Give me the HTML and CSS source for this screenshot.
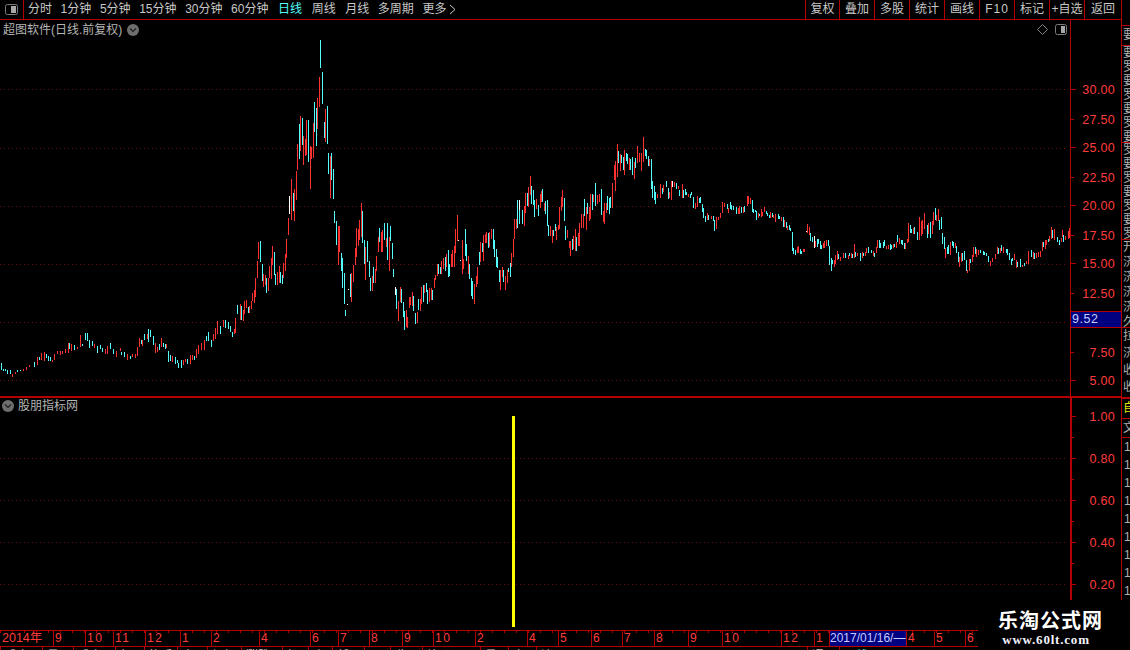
FILE: index.html
```html
<!DOCTYPE html>
<html lang="zh-CN">
<head>
<meta charset="utf-8">
<title>超图软件</title>
<link rel="stylesheet" href="styles.css">
</head>
<body>
<div class="app">
  <div class="left">
    <header class="toolbar">
      <div class="toggle-box">
        <svg class="toggle-icon" width="13" height="11" viewBox="0 0 13 11"><rect x="0.5" y="0.5" width="12" height="10" rx="2" fill="none" stroke="#7c7c7c"/><rect x="6" y="2" width="5" height="7" fill="#a8a8a8"/></svg>
      </div>
      <nav class="periods">
        <span>分时</span><span>1分钟</span><span>5分钟</span><span>15分钟</span><span>30分钟</span><span>60分钟</span><span class="active">日线</span><span class="wide">周线</span><span>月线</span><span>多周期</span><span>更多</span>
        <svg class="more-arrow" width="7" height="11" viewBox="0 0 7 11"><path d="M1 1l5 4.5L1 10" fill="none" stroke="#c8c8c8"/></svg>
      </nav>
      <div class="actions">
        <span class="first">复权</span><span>叠加</span><span>多股</span><span>统计</span><span>画线</span><span class="latin">F10</span><span>标记</span><span>+自选</span><span class="last">返回</span>
      </div>
    </header>

    <section class="pane pane-main">
      <svg class="chart" width="1121" height="376" viewBox="0 20 1121 376">
        <g class="grid">
          <path d="M0 89.5H1068M0 148.5H1068M0 206.5H1068M0 264.5H1068M0 322.5H1068M0 380.5H1068"/>
        </g>
        <path class="axis-line" d="M1070.5 20V396"/>
        <path class="axis-line" d="M1071 89.5h5M1071 119.5h3M1071 147.5h5M1071 177.5h3M1071 205.5h5M1071 235.5h3M1071 263.5h5M1071 293.5h3M1071 352.5h3M1071 380.5h5"/>
        <path id="bars-red" class="bars bars-red"/>
        <path id="bars-cyan" class="bars bars-cyan"/>
        <path id="bars-white" class="bars bars-white"/>
        <text class="tick" x="1115" y="94">30.00</text>
        <text class="tick" x="1115" y="124">27.50</text>
        <text class="tick" x="1115" y="152">25.00</text>
        <text class="tick" x="1115" y="182">22.50</text>
        <text class="tick" x="1115" y="210">20.00</text>
        <text class="tick" x="1115" y="240">17.50</text>
        <text class="tick" x="1115" y="268">15.00</text>
        <text class="tick" x="1115" y="298">12.50</text>
        <text class="tick" x="1115" y="357">7.50</text>
        <text class="tick" x="1115" y="385">5.00</text>
      </svg>
      <div class="pane-title pane-title-main">
        <span>超图软件(日线.前复权)</span>
        <svg class="chevron" width="12" height="12" viewBox="0 0 12 12"><circle cx="6" cy="6" r="6" fill="#6e6e6e"/><path d="M3 4.5l3 3 3-3" fill="none" stroke="#1e1e1e" stroke-width="1.2"/></svg>
      </div>
      <div class="pane-tools">
        <svg width="11" height="11" viewBox="0 0 11 11"><path d="M5.5 .5l5 5-5 5-5-5z" fill="none" stroke="#808080"/></svg>
        <svg width="12" height="11" viewBox="0 0 12 11"><rect x="0.5" y="0.5" width="11" height="10" rx="2" fill="none" stroke="#7c7c7c"/><rect x="6" y="2" width="4" height="7" fill="#a8a8a8"/></svg>
      </div>
      <div class="last-price">9.52</div>
    </section>

    <section class="pane pane-sub">
      <svg class="chart" width="1121" height="232" viewBox="0 398 1121 232">
        <g class="grid">
          <path d="M0 458.5H1068M0 500.5H1068M0 542.5H1068M0 584.5H1068"/>
        </g>
        <path class="axis-line axis-thick" d="M1071 398V600"/>
        <path class="axis-line" d="M1071 416.5h5M1071 437.5h3M1071 458.5h5M1071 479.5h3M1071 500.5h5M1071 521.5h3M1071 542.5h5M1071 563.5h3M1071 584.5h5"/>
        <rect class="signal" x="512" y="416" width="3" height="211"/>
        <text class="tick" x="1115" y="421">1.00</text>
        <text class="tick" x="1115" y="463">0.80</text>
        <text class="tick" x="1115" y="505">0.60</text>
        <text class="tick" x="1115" y="547">0.40</text>
        <text class="tick" x="1115" y="589">0.20</text>
      </svg>
      <div class="pane-title pane-title-sub">
        <svg class="chevron" width="12" height="12" viewBox="0 0 12 12"><circle cx="6" cy="6" r="6" fill="#6e6e6e"/><path d="M3 4.5l3 3 3-3" fill="none" stroke="#1e1e1e" stroke-width="1.2"/></svg>
        <span>股朋指标网</span>
      </div>
    </section>

    <div class="time-axis">
      <span style="width:53px">2014年</span><span style="width:32px">9</span><span style="width:28px">10</span><span style="width:32px">11</span><span style="width:35px">12</span><span style="width:31px">1</span><span style="width:48px">2</span><span style="width:51px">4</span><span style="width:28px">6</span><span style="width:31px">7</span><span style="width:33px">8</span><span style="width:31px">9</span><span style="width:42px">10</span><span style="width:52px">2</span><span style="width:31px">4</span><span style="width:33px">5</span><span style="width:31px">6</span><span style="width:32px">7</span><span style="width:34px">8</span><span style="width:34px">9</span><span style="width:59px">10</span><span style="width:33px">12</span><span style="width:15px">1</span><span class="cursor-date" style="width:77px">2017/01/16/—</span><span style="width:28px">4</span><span style="width:31px">5</span><span style="width:13px">6</span>
    </div>
    <div class="status-strip">
      <span style="width:42px">成交</span><span style="width:31px">量</span><span style="width:42px">成交</span><span style="width:29px">额</span><span style="width:33px">换手</span><span style="width:30px">率</span><span style="width:34px">振幅</span><span style="width:41px">涨跌</span><span style="width:26px">幅</span><span style="width:24px">高</span><span style="width:32px">低</span><span style="width:26px">开</span><span style="width:32px">收</span><span style="width:58px">均价</span><span style="width:28px">量比</span><span style="width:28px">市</span><span style="width:271px">流</span><span style="width:32px">通</span><span class="status-active" style="width:32px">日线</span>
    </div>
  </div>

  <aside class="side">
    <div class="side-blank"></div>
    <div class="side-group side-g1">要</div>
    <div class="side-group side-g2">要<br>罗<br>要<br>罗<br>要<br>罗<br>要</div>
    <div class="side-group side-g3">罗<br>要<br>罗<br>要<br>罗<br>要<br>罗</div>
    <div class="side-group side-g4">开<br>济<br>济<br>济<br>济<br>久</div>
    <div class="side-group side-g5">拉<br>济<br>收<br>收</div>
    <div class="side-group side-g6">自</div>
    <div class="side-group side-g7">文</div>
    <div class="side-group side-g8">1<br>1<br>1<br>1<br>1<br>1<br>1<br>1<br>1</div>
  </aside>

  <div class="watermark">
    <div class="wm-name">乐淘公式网</div>
    <div class="wm-url">www.60lt.com</div>
  </div>
</div>
<script src="chart.js"></script>
</body>
</html>
```

FILE: styles.css
```css
* { box-sizing: border-box; }

html, body {
  margin: 0;
  width: 1130px;
  height: 650px;
  overflow: hidden;
  background: #000;
}

.app {
  position: relative;
  display: flex;
  width: 1130px;
  height: 650px;
  font: 12px "Liberation Sans", "Noto Sans CJK SC", sans-serif;
  color: #c8c8c8;
}

.left {
  display: flex;
  flex-direction: column;
  width: 1122px;
  height: 650px;
  border-right: 1px solid #b40000;
}

/* toolbar */
.toolbar {
  display: flex;
  align-items: stretch;
  flex: 0 0 20px;
  border-bottom: 1px solid #b40000;
  line-height: 19px;
}

.toggle-box {
  display: flex;
  align-items: center;
  justify-content: center;
  width: 24px;
  border-right: 1px solid #b40000;
}

.periods {
  display: flex;
  align-items: center;
  gap: 8.6px;
  margin-left: 4px;
}

.periods .active {
  margin: 0 1px;
  color: #54fcfc;
}

.periods .wide { margin-right: 1px; }
.more-arrow { margin-left: -6px; }

.actions {
  display: flex;
  margin-left: auto;
}

.actions span {
  width: 35px;
  border-left: 1px solid #b40000;
  text-align: center;
}

.actions .first { width: 34px; }
.actions .last { width: 37px; }
.actions .latin { letter-spacing: 1px; }

/* panes */
.pane { position: relative; }
.pane-main { flex: 0 0 376px; }
.pane-sub {
  flex: 0 0 234px;
  border-top: 2px solid #b40000;
}

.chart { display: block; }

.grid path {
  fill: none;
  stroke: #681010;
  stroke-width: 1;
  stroke-dasharray: 1 3;
  shape-rendering: crispEdges;
}

.axis-line {
  fill: none;
  stroke: #b40000;
  stroke-width: 1;
  shape-rendering: crispEdges;
}

.axis-thick { stroke-width: 2; }

.bars {
  fill: none;
  stroke-width: 1;
  shape-rendering: crispEdges;
}

.bars-red { stroke: #ff3232; }
.bars-cyan { stroke: #54fcfc; }
.bars-white { stroke: #fff; }

.signal { fill: #ffff00; }

.tick {
  fill: #ff3c3c;
  font: 12.5px "Liberation Sans", sans-serif;
  text-anchor: end;
  letter-spacing: .3px;
}

.pane-title {
  position: absolute;
  display: flex;
  align-items: center;
  gap: 5px;
  line-height: 16px;
  color: #b4b4b4;
}

.pane-title-main { left: 3px; top: 2px; }
.pane-title-sub { left: 2px; top: 0; gap: 4px; }

.pane-tools {
  position: absolute;
  top: 4px;
  left: 1037px;
  display: flex;
  gap: 7px;
  line-height: 0;
}

.last-price {
  position: absolute;
  left: 1071px;
  top: 291px;
  width: 50px;
  height: 17px;
  padding-left: 1px;
  background: #000080;
  border-top: 1px solid #b40000;
  border-bottom: 1px solid #b40000;
  color: #c4ccff;
  font-size: 12.5px;
  letter-spacing: .5px;
  line-height: 15px;
}

/* time axis */
.time-axis {
  display: flex;
  flex: 0 0 17px;
  width: 979px;
  border-top: 1px solid #b40000;
  border-bottom: 1px solid #b40000;
  border-right: 1px solid #b40000;
  background: repeating-linear-gradient(to right, #b40000 0 1px, transparent 1px 12px) 0 0 / 100% 2px no-repeat;
  color: #ff3c3c;
  line-height: 15px;
}

.time-axis span {
  flex: none;
  padding-left: 1px;
  border-left: 1px solid #b40000;
  letter-spacing: 1.5px;
  white-space: nowrap;
  overflow: hidden;
}

.time-axis span:first-child {
  padding-left: 2px;
  border-left: 0;
  letter-spacing: 0;
  font-size: 12.5px;
}

.time-axis .cursor-date {
  padding-left: 0;
  background: #000080;
  color: #c4ccff;
  letter-spacing: 0;
}

.status-strip {
  display: flex;
  flex: 0 0 3px;
  overflow: hidden;
  line-height: 19px;
  color: #c8c8c8;
}

.status-strip span {
  flex: none;
  height: 3px;
  padding-left: 4px;
  border-left: 1px solid #b40000;
  overflow: hidden;
}

.status-strip .status-active { color: #54fcfc; }

/* clipped right-hand list */
.side {
  display: flex;
  flex-direction: column;
  width: 8px;
  height: 650px;
  overflow: hidden;
  color: #b0b0b0;
  font-size: 12px;
}

.side-blank { flex: 0 0 25px; }

.side-group {
  padding-left: 1px;
  overflow: hidden;
  border-top: 1px solid #b40000;
  white-space: nowrap;
}

.side-g1 { flex: 0 0 20px; line-height: 19px; }
.side-g2 { flex: 0 0 97px; line-height: 14px; }
.side-g3 { flex: 0 0 97px; line-height: 14px; }
.side-g4 { flex: 0 0 88px; line-height: 15px; }
.side-g5 { flex: 0 0 70px; line-height: 17px; }
.side-g6 { flex: 0 0 21px; line-height: 19px; color: #e6e600; border-top-width: 2px; }
.side-g7 { flex: 0 0 19px; line-height: 18px; }
.side-g8 { flex: 0 0 163px; line-height: 18px; padding-left: 2px; }

/* watermark */
.watermark {
  position: absolute;
  left: 978px;
  top: 600px;
  width: 152px;
  height: 50px;
  padding-top: 8px;
  background: #000;
  color: #fff;
  text-align: center;
}

.wm-name {
  margin-left: 20px;
  width: 104px;
  font: 700 20px/24px "Noto Sans CJK SC", sans-serif;
  letter-spacing: 1px;
  white-space: nowrap;
}

.wm-url {
  margin-left: 23px;
  width: 90px;
  font: 700 13px/15px "Liberation Serif", serif;
  letter-spacing: .8px;
  white-space: nowrap;
  color: #f4f4ff;
}
```

FILE: chart.js
```js
// Candle wicks read off the chart: colour, x, top, bottom in zoom units per stretch.
var stretches = [
  [0, 320, "c4,129,150 c10,147,153 c16,147,153 c22,150,162 c31,150,162 r37,162,171 r46,156,162 c52,150,156 c61,150,153 r70,147,153 r79,141,150 r88,135,141 c103,126,141 r112,111,135 c118,111,120 r124,99,120 r133,96,123 c139,102,114 c145,108,123 c151,111,123 r157,120,126 r163,102,120 r172,93,102 r181,93,105 r187,93,102 r196,87,99 r205,69,99 c208,69,87 r214,72,93 c223,75,90 r232,81,87 r241,45,81 c247,72,78 c256,39,60 c262,39,63 c268,60,84 c277,63,78 r283,72,84 c292,78,99 c301,75,87 c307,84,96 r316,87,102 r322,78,102 c331,69,87 c340,87,102 r349,93,111 r361,84,93 c364,96,105 c373,96,111 r382,102,120 c391,108,117 r397,102,111 r406,102,114 r412,81,108 r418,54,81 c424,60,72 r427,60,78 c433,42,60 r442,42,57 c445,27,66 c451,30,51 c460,48,75 r466,69,99 r472,81,96 c478,72,90 r484,54,81 c490,69,81 c496,72,87 r499,72,84 c505,93,126 c511,105,123 r517,108,126 c526,111,132 c532,120,129 c535,129,144 c544,120,144 r550,120,135 r556,117,126 c562,117,132 r571,105,132 r577,105,120 c583,108,120 r589,87,114 r595,75,102 r604,69,90 r613,60,90 c619,48,63 c625,36,63 c634,60,81 r640,42,63 r646,24,57 r652,3,42 c661,18,42 r670,0,21 c676,0,24 c685,6,27 c691,18,36 c697,36,51 r703,27,42 r706,0,30"],
  [160, 180, "r226,414,459 c232,375,402 r241,372,420 c244,378,420 r250,390,423 r253,363,402 r259,360,384 c265,381,399 r268,378,399"],
  [250, 30, "r4,812,836 r8,790,812 r13,780,820 r16,745,800 r22,693,745 r26,636,686 c31,633,697 c37,702,752 r40,732,772 r46,735,765 c49,744,788 r55,745,782 r58,708,745 r64,685,748 r67,648,706 c73,666,735 c76,732,764 r82,725,764 r88,708,758 c91,726,758 c97,735,762 r100,700,745 r106,672,722 r109,627,685 r115,564,614 w118,498,552 r124,447,570 c130,490,542 r133,477,572 r139,423,510 r142,342,420 c148,282,387 r151,258,362 c157,264,345 r160,318,404 r166,326,378 r169,270,375 c175,270,396 r181,348,476 r184,350,388 r190,280,384 c193,216,305 c199,235,347 r202,205,296 r208,140,232 c211,30,113 c217,126,221 c223,276,324 r226,237,335 c232,228,342 c235,369,431 r241,378,503 c244,369,449 c250,417,506 c253,543,578 c259,573,644 r265,588,705 r268,588,666 c274,669,722 c277,684,774 c283,729,822 w295,776,779 w292,822,825 c286,840,857 c301,732,800 r304,729,815 r310,705,755 r316,654,705 r319,594,680 r325,597,647 r328,570,630 r334,519,620 c337,543,640 c343,630,702 r346,651,750 c352,633,696 c358,693,741 c361,744,782 r367,738,782 c370,711,759 r376,717,759 r379,678,723 r385,621,666 c388,594,636 r394,606,666 r397,600,666 c403,579,630 r409,624,651 c412,579,690 r418,621,723 c421,588,633 c427,639,687 c430,717,741 w436,771,795 c439,777,837 r445,813,873"],
  [390, 130, "r25,513,573 r31,471,517 c34,477,519 c40,516,561 c43,543,600 r49,540,591 r52,561,594 r58,501,534 r61,501,525 r67,486,528 c70,498,543 c76,549,582 r82,546,579 c85,507,540 r91,507,543 r94,471,522 c100,465,516 r103,465,489 c109,459,486 c112,480,522 r118,474,516 r124,474,510 c127,480,510 r133,444,474 r136,435,450 r142,402,438 c145,402,432 c151,411,432 r154,393,432 r160,384,417 c166,381,423 r169,372,411 c175,360,441 c178,402,438 r184,372,411 r187,360,411 r193,348,411 r196,297,369 r202,255,333 w205,330,333 w211,390,393 r217,330,432 r220,387,417 c226,297,378 c229,342,393 r235,378,432 c238,402,447 c244,444,498 c247,453,507 r253,462,522 r259,438,471 r262,411,462 c268,366,405 r271,336,396 c277,339,366 r280,315,393 r286,312,339 r289,306,339 c295,309,354 r298,306,351 r304,297,327 c310,297,357 c313,330,381 c319,357,411 c322,381,414 c328,420,456 r331,420,480 r337,411,441 c340,420,456 r346,438,480 r352,420,459 c355,414,426 c361,399,441 r364,369,411 r370,327,381 r373,267,327 r379,267,297 c382,210,294 w388,210,240 c388,240,282 c397,240,282 r403,228,288 r406,189,249 c412,189,228 r415,171,231 r421,138,195 c424,168,222 c430,180,225 c433,210,261 r439,207,238 c445,225,258 r451,192,234 r454,183,216 c457,177,216 r463,219,243 c466,213,252 c472,210,288 c475,285,318 r481,288,318 r487,300,339 c490,300,318 c496,282,303 r499,291,330 r505,285,300 r508,231,297 r514,201,243 r517,180,231 c523,204,273 c526,288,330 r532,300,324 r538,333,354 r541,333,378 c547,327,360 r550,318,357 r556,297,363 c559,321,363 r565,309,348 r568,279,348 r574,252,294 r580,252,294 c583,207,258 r589,231,300 c592,219,252 r598,231,273 r601,192,267 c607,192,240 r610,195,216 c616,159,228 r622,195,222 r628,192,216 c634,177,255 r640,243,276 r643,219,282 r649,219,249 c652,198,240 c658,204,252 c661,201,234 r667,159,234 r673,105,150 r676,93,183 r682,42,141 c685,63,99 r691,72,123 c694,75,99 c700,81,120 r703,60,135 c709,69,93 c712,72,102 r718,84,120 c721,87,120 c727,81,135 r733,96,147 c736,84,114 r742,48,99 r748,69,96 r754,69,123 r760,21,96 c766,57,78 c769,60,87 c775,78,108 r778,87,108 c784,87,177 c787,153,204 c793,168,210 c796,186,222 r802,192,204 r811,162,204 c817,174,192 r820,165,186 c829,153,171 c835,174,207 r838,186,204 r844,153,210 w847,153,171 r853,156,171 c859,159,177 r865,168,177 c868,180,198 r877,162,204 c880,180,204 c886,177,195 c889,186,195 r895,192,201 c901,192,204 c904,186,195 c910,201,234 r916,219,237 r922,198,231 c928,204,219 c931,201,219 c937,222,246 c940,234,264 c946,258,276 r952,249,270 c955,255,270 r964,258,267 c970,258,273 c973,270,303 r979,261,297 r985,261,270 r991,249,264 r997,216,249 r1003,219,231 c1012,222,237 r1015,234,249"],
  [730, 170, "c1,96,117 c4,105,120 c10,108,120 c19,111,132 r25,114,132 r28,108,132 c34,111,129 r40,111,129 c43,108,126 r52,78,108 r55,78,102 r61,84,102 c67,90,126 c70,117,129 c76,120,126 c79,123,150 r85,129,144 c88,132,138 r94,117,141 r97,126,138 r103,111,126 c109,123,132 c112,129,138 c118,135,144 r121,126,144 c127,129,141 r130,135,144 r136,132,156 c145,132,147 c148,138,147 r154,141,153 c160,141,171 r163,150,171 c169,156,174 r172,168,180 c178,165,180 c181,174,183 c187,186,243 c190,234,252 c196,240,255 r202,231,249 r205,228,249 c211,237,252 c214,243,252 r220,237,246 r223,237,246 w229,183,186 r232,162,189 r238,171,195 c241,189,213 c247,201,216 w253,198,234 r256,213,231 c262,207,231 c265,207,222 c271,213,237 c274,225,237 r280,219,234 r283,213,234 r289,210,228 c295,210,228 c298,228,285 c304,264,303 c307,270,282 r313,270,291 r316,255,282 r322,243,270 c325,252,267 r331,261,273 r340,249,264 c346,249,264 r355,255,267 c358,249,258 r364,249,264 c367,252,264 r373,222,264 c376,246,261 r382,249,258 c391,249,273 r397,246,264 c400,249,258 r406,246,258 r409,234,249 c415,231,249 c424,240,249 r430,243,258 c433,249,261 r439,231,249 r442,210,234 c448,210,234 c451,219,234 c460,216,234 c463,210,228 r469,228,237 r475,225,237 c481,222,240 c484,225,237 r490,222,234 c493,222,231 r499,216,234 c502,195,216 r508,204,222 c514,210,222 c517,210,225 c523,219,237 r526,219,237 r532,207,219 r535,159,216 c541,165,189 c544,177,189 r550,174,192 c553,171,192 c562,186,210 r568,141,210 r574,153,198 r577,150,192 r583,129,177 c592,165,204 r595,159,192 c601,156,204 r607,153,192 r610,126,165 c616,114,150 r619,135,153 r625,117,153 c628,150,180 c634,141,177 c637,189,222 c643,201,237 r646,234,264 c652,231,252 c655,225,252 r661,216,255 c667,213,228 c670,216,234 r676,219,234 c679,228,249 c685,246,276 r688,261,291 r694,249,276 c697,249,273 c703,243,270 c709,270,303 r712,300,309 r718,267,303 c721,267,279 r727,255,276 r730,231,261 c736,231,252 r739,237,261 r745,240,255 c751,240,249 c760,243,255 c763,246,255 c769,249,258 c775,258,276 r781,273,288 r787,264,276 r796,252,267 r802,231,252 c805,234,252 r811,234,249 c814,225,243 r820,231,249 c829,237,249 c832,237,255 c838,249,270 c844,267,285 c847,264,273 r853,252,270 r859,270,294 c862,276,291 c871,267,291 r877,285,291 c883,279,288 r889,273,282 r895,243,282 c904,240,261 r910,246,267 c913,249,267 r919,249,264 r925,246,261 r931,243,261 r937,216,243 c940,216,231 r946,210,237 r949,210,225 c955,207,216 r958,198,213 r964,171,207 c967,180,204 r973,177,210 c982,201,216 c988,210,225 r994,204,216 r997,180,201 c1000,195,216 r1006,198,210 r1015,183,207 r1018,174,204"]
];

var paths = { r: "", c: "", w: "" };

stretches.forEach(function (stretch) {
  stretch[2].split(" ").forEach(function (item) {
    var colour = item.charAt(0);
    var parts = item.slice(1).split(",").map(Number);
    var x = stretch[0] + Math.floor(parts[0] / 3) + 0.5;
    var top = stretch[1] + Math.round(parts[1] / 3);
    var bottom = stretch[1] + Math.round(parts[2] / 3);
    paths[colour] += "M" + x + " " + top + "V" + bottom;
  });
});

document.getElementById("bars-red").setAttribute("d", paths.r);
document.getElementById("bars-cyan").setAttribute("d", paths.c);
document.getElementById("bars-white").setAttribute("d", paths.w);
```
